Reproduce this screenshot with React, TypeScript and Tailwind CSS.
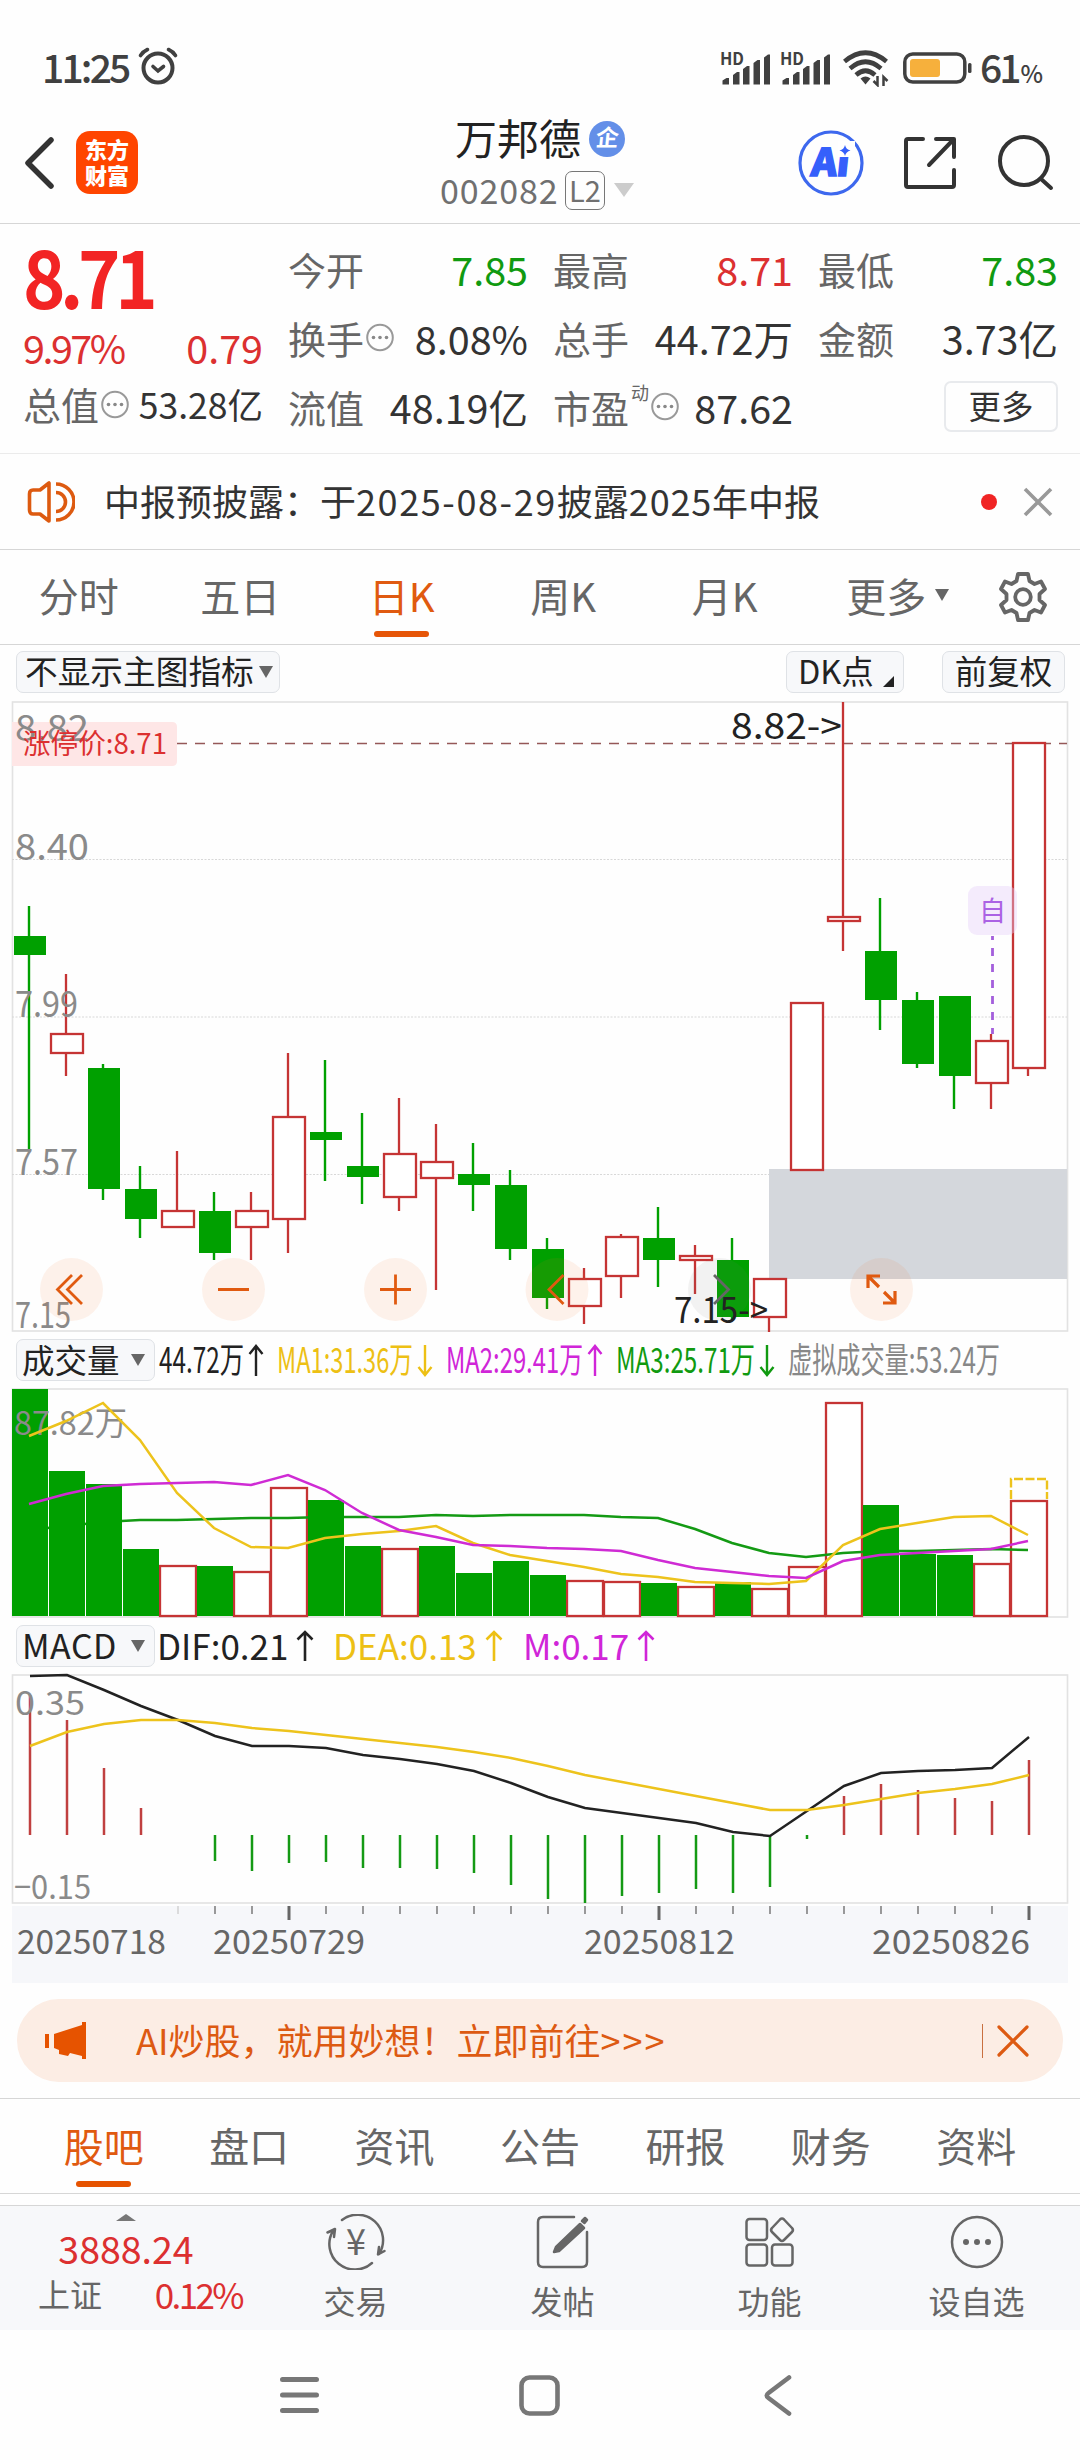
import type { ReactNode } from 'react';

type Candle = { up: boolean; high: number; top: number; bottom: number; low: number };

const RED = '#c53434';
const GREEN = '#00a000';
const FONT = '"Noto Sans CJK SC", sans-serif';

// [rise?, high, body top, body bottom, low] in chart pixels
const rawCandles: [number, number, number, number, number][] = [
  [0, 906, 936, 955, 1149],
  [1, 974, 1033, 1054, 1076],
  [0, 1064, 1068, 1189, 1200],
  [0, 1166, 1189, 1219, 1238],
  [1, 1151, 1210, 1228, 1228],
  [0, 1192, 1211, 1253, 1260],
  [1, 1192, 1210, 1228, 1260],
  [1, 1053, 1116, 1220, 1253],
  [0, 1060, 1132, 1140, 1181],
  [0, 1113, 1166, 1177, 1204],
  [1, 1098, 1153, 1198, 1211],
  [1, 1124, 1161, 1179, 1290],
  [0, 1143, 1174, 1185, 1211],
  [0, 1170, 1185, 1249, 1260],
  [0, 1238, 1249, 1298, 1309],
  [1, 1268, 1278, 1307, 1324],
  [1, 1234, 1236, 1277, 1298],
  [0, 1207, 1238, 1260, 1287],
  [1, 1245, 1255, 1261, 1294],
  [0, 1238, 1260, 1317, 1321],
  [1, 1278, 1278, 1318, 1332],
  [1, 1002, 1002, 1171, 1171],
  [1, 702, 916, 922, 951],
  [0, 898, 951, 1000, 1030],
  [0, 992, 1000, 1064, 1068],
  [0, 996, 996, 1076, 1109],
  [1, 1034, 1040, 1084, 1109],
  [1, 742, 742, 1069, 1076],
];

const candles: Candle[] = rawCandles.map(([up, high, top, bottom, low]) => ({ up: up === 1, high, top, bottom, low }));

const volumeTops = [
  1389, 1471, 1484, 1549, 1565, 1566, 1571, 1487, 1500, 1546, 1548, 1546, 1573, 1561, 1575, 1580, 1581, 1583, 1586, 1582,
  1588, 1566, 1402, 1505, 1554, 1555, 1563, 1500,
];
// days whose volume bar is hollow
const hollowVolume = [4, 6, 7, 10, 15, 16, 18, 20, 21, 22, 26, 27];
const ma1 = [
  1436, 1421, 1403, 1440, 1493, 1528, 1547, 1548, 1538, 1534, 1531, 1526, 1543, 1555, 1561, 1567, 1574, 1577, 1582, 1583,
  1584, 1581, 1545, 1529, 1523, 1517, 1516, 1535,
];
const ma2 = [
  1504, 1494, 1486, 1484, 1483, 1482, 1485, 1475, 1490, 1513, 1530, 1537, 1545, 1546, 1548, 1549, 1551, 1560, 1568, 1572,
  1576, 1578, 1561, 1555, 1553, 1551, 1549, 1541,
];
const ma3 = [
  1530, 1526, 1522, 1520, 1520, 1519, 1518, 1518, 1517, 1517, 1517, 1515, 1516, 1515, 1515, 1515, 1517, 1518, 1529, 1543,
  1553, 1557, 1553, 1551, 1551, 1550, 1549, 1550,
];
const dif = [
  1676, 1675, 1690, 1706, 1720, 1736, 1746, 1746, 1748, 1755, 1759, 1764, 1771, 1783, 1797, 1808, 1813, 1818, 1823, 1832,
  1836, 1811, 1786, 1773, 1771, 1770, 1768, 1737,
];
const dea = [
  1746, 1732, 1724, 1720, 1720, 1723, 1728, 1731, 1735, 1739, 1743, 1747, 1752, 1758, 1766, 1775, 1782, 1789, 1796, 1803,
  1810, 1810, 1805, 1799, 1793, 1789, 1784, 1775,
];
const macd = [
  1695, 1720, 1768, 1808, 1835, 1861, 1871, 1863, 1862, 1868, 1868, 1869, 1873, 1885, 1899, 1903, 1896, 1893, 1889, 1893,
  1887, 1839, 1796, 1784, 1790, 1798, 1801, 1760,
];

const cx = (i: number) => 29 + 37 * i;
const points = (values: number[], shift = 0) => values.map((y, i) => `${cx(i) + shift},${y}`).join(' ');

function Label({ x, y, w, size = 36, fill = '#8a8a8a', children }: { x: number; y: number; w: number; size?: number; fill?: string; children: ReactNode }) {
  return (
    <text x={x} y={y} fontSize={size} fill={fill} textLength={w} lengthAdjust="spacingAndGlyphs" fontFamily={FONT}>
      {children}
    </text>
  );
}

function Signal() {
  return (
    <svg width="50" height="34" viewBox="0 0 50 34" fill="#404040" className="overflow-visible">
      <text x="0" y="14" fontSize="16.500" fontWeight="700" textLength="24" lengthAdjust="spacingAndGlyphs" fontFamily={FONT}>HD</text>
      <path d="M2.500 33.500v-4l4-2.500h2.500v6.500zM13 33.500V24l4-3h2.500v12.500zM23 33.500V18l4-3h2.500v18.500zM33.500 33.500V12l4-3h2.500v24.500zM44 33.500V6.500l4-3h2v30z" />
    </svg>
  );
}

function StatusBar() {
  return (
    <div className="flex h-[110px] items-center justify-between pt-[26px] pl-[42px] pr-[43px] text-[#404040]">
      <div className="flex items-center">
        <span className="w-[96px] text-[39px] font-medium tracking-[-2.800px] -mt-1">11:25</span>
        <svg width="40" height="38" viewBox="0 0 40 38" fill="none" stroke="#404040" strokeWidth="4" strokeLinecap="round" className="-mt-1">
          <circle cx="20" cy="21" r="14.500" />
          <path d="M2.500 8.500Q5 4.500 9.500 2.500M30.500 2.500Q35 4.500 37.500 8.500" strokeWidth="3.600" />
          <path d="M15 19.500l5 4.500 5.500-4.500" strokeWidth="3.600" />
        </svg>
      </div>
      <div className="flex items-center">
        <Signal />
        <div className="w-[10px]" />
        <Signal />
        <svg width="48" height="38" viewBox="0 0 48 38" fill="none" stroke="#404040" strokeWidth="4.600" className="ml-[12px]">
          <path d="M2.500 12.500Q23.500-5 44.500 12.500" />
          <path d="M8 19.500Q23.500 6 39 19.500" />
          <path d="M14 26Q23.500 17.500 33 26" />
          <path d="M18.500 29.500Q23.500 25.500 28.500 29.500L23.500 35.500z" fill="#404040" stroke="none" />
          <path d="M35.500 27v9l-4-4M41.500 37v-9l4 4" strokeWidth="2.500" />
        </svg>
        <svg width="70" height="32" viewBox="0 0 70 32" className="ml-[13px]">
          <rect x="1.800" y="2" width="60" height="28" rx="8" fill="none" stroke="#404040" strokeWidth="3.500" />
          <rect x="7" y="7" width="30" height="18" rx="3" fill="#f6b03c" />
          <rect x="65" y="11" width="3.500" height="10" rx="1.500" fill="#404040" />
        </svg>
        <span className="ml-[7px] flex w-[57px] items-baseline -mt-1 text-[39px] font-medium tracking-[-3px]">
          61<span className="ml-[2px] text-[24px] tracking-[-1px]">%</span>
        </span>
      </div>
    </div>
  );
}

function Header() {
  return (
    <header className="flex h-[114px] items-center border-b border-[#d6d6d6] pb-[8px]">
      <div className="flex w-[398px] items-center pl-[24px]">
        <svg width="32" height="54" viewBox="0 0 32 54" fill="none" stroke="#333" strokeWidth="5.500" strokeLinecap="round" strokeLinejoin="round">
          <path d="M27 4L4 27l23 23" />
        </svg>
        <div className="ml-[20px] flex h-[63px] w-[62px] flex-col items-center justify-center gap-[2px] rounded-[14px] bg-[#ff4500] pb-[3px] text-[22px] leading-[24px] font-black text-white">
          <span>东方</span>
          <span>财富</span>
        </div>
      </div>
      <div className="flex w-[282px] flex-col items-center">
        <div className="flex h-[46px] items-center pl-[2px]">
          <span className="-mt-[3px] text-[42px] text-[#222]">万邦德</span>
          <span className="ml-[8px] flex size-[36px] items-center justify-center rounded-full bg-[#638fe8] text-[23px] font-bold text-white">
            <span className="-mt-1 -skew-x-6">企</span>
          </span>
        </div>
        <div className="-ml-[4px] mt-[9px] flex h-[39px] items-center text-[34px] text-[#707070]">
          <span className="w-[125px] tracking-[0.900px]">002082</span>
          <span className="flex h-[39px] w-[40px] items-center justify-center rounded-[7px] border border-[#777] pb-[2px] text-[29px]">L2</span>
          <svg width="20" height="14" viewBox="0 0 20 14" className="ml-[9px]"><path d="M0 0h20L10 14z" fill="#ccc" /></svg>
        </div>
      </div>
      <div className="flex flex-1 items-center pl-[118px]">
        <svg width="66" height="66" viewBox="0 0 66 66">
          <circle cx="33" cy="33" r="31" fill="none" stroke="#3d68ee" strokeWidth="3.200" />
          <g fill="#3560fb">
            <text x="13" y="46" fontSize="38" fontWeight="900" textLength="38" lengthAdjust="spacingAndGlyphs" stroke="#3560fb" strokeWidth="1.500" transform="skewX(-6) translate(4 0)" fontFamily={FONT}>Ai</text>
            <rect x="40" y="11" width="17" height="16" fill="#fff" />
            <path d="M47 15q1 4.500 5.500 5.500-4.500 1-5.500 5.500-1-4.500-5.500-5.500 4.500-1 5.500-5.500z" />
          </g>
        </svg>
        <svg width="54" height="54" viewBox="0 0 54 54" fill="none" stroke="#333" strokeWidth="4" strokeLinecap="round" strokeLinejoin="round" className="ml-[39px]">
          <path d="M20 3H5Q3 3 3 5v44q0 2 2 2h44q2 0 2-2V34M33 3h18v18M50 4L26 29" />
        </svg>
        <svg width="56" height="56" viewBox="0 0 56 56" fill="none" stroke="#333" strokeWidth="4" strokeLinecap="round" className="ml-[41px]">
          <circle cx="26" cy="26" r="24" />
          <path d="M42.500 43.500L53 53" />
        </svg>
      </div>
    </header>
  );
}

function Info() {
  return (
    <svg width="28" height="29" viewBox="0 0 28 28" className="ml-[2px]">
      <circle cx="14" cy="14" r="12.800" fill="none" stroke="#999" strokeWidth="2" />
      <g fill="#888"><circle cx="7.500" cy="14" r="1.800" /><circle cx="14" cy="14" r="1.800" /><circle cx="20.500" cy="14" r="1.800" /></g>
    </svg>
  );
}

function Stat({ label, value, color = 'text-[#333]', extra }: { label: string; value: string; color?: string; extra?: ReactNode }) {
  return (
    <div className="flex items-center justify-between whitespace-nowrap">
      <span className="flex items-center text-[38px] text-[#666]">{label}{extra}</span>
      <span className={`text-[39.500px] ${color}`}>{value}</span>
    </div>
  );
}

function Quote() {
  return (
    <section className="grid h-[230px] grid-cols-4 gap-x-[25px] border-b border-[#ebebeb] pt-[10px] pr-[22px] pb-[12px] pl-[23px]">
      <div className="flex flex-col">
        <span className="h-[85px] origin-left scale-x-90 text-[80px] leading-[80px] font-bold tracking-[-6px] text-[#f22424]">8.71</span>
        <div className="flex h-[52px] items-center justify-between pt-1 text-[39.500px] text-[#dc3030]">
          <span className="tracking-[-2.500px]">9.97%</span>
          <span>0.79</span>
        </div>
        <div className="flex h-[66px] items-center justify-between text-[38px] whitespace-nowrap text-[#666]">
          <span className="flex items-center">总值<Info /></span>
          <span className="text-[35.500px] text-[#333]">53.28亿</span>
        </div>
      </div>
      <div className="grid grid-rows-3">
        <Stat label="今开" value="7.85" color="text-[#109a10]" />
        <Stat label="换手" value="8.08%" extra={<Info />} />
        <Stat label="流值" value="48.19亿" />
      </div>
      <div className="grid grid-rows-3">
        <Stat label="最高" value="8.71" color="text-[#dc3030]" />
        <Stat label="总手" value="44.72万" />
        <Stat label="市盈" value="87.62" extra={<><span className="-mt-[30px] ml-[2px] text-[18px]">动</span><Info /></>} />
      </div>
      <div className="grid grid-rows-3">
        <Stat label="最低" value="7.83" color="text-[#109a10]" />
        <Stat label="金额" value="3.73亿" />
        <div className="flex items-center justify-end">
          <button className="flex h-[51px] w-[114px] items-center justify-center rounded-[7px] border-2 border-[#e8eaed] pb-[2px] text-[32.500px] text-[#333]">更多</button>
        </div>
      </div>
    </section>
  );
}

function Notice() {
  return (
    <section className="flex h-[96px] items-center border-b border-[#d6d6d6] pl-[27px]">
      <svg width="48" height="42" viewBox="0 0 48 42" fill="none" stroke="#dd5a10" strokeWidth="3.600">
        <path d="M22 2v38L13 33H6q-3.500 0-3.500-4V13q0-4 3.500-4h7z" strokeLinejoin="round" />
        <path d="M29 3a18 18 0 0 1 0 36M29 11.500a9.500 9.500 0 0 1 0 19" />
      </svg>
      <span className="ml-[29px] -mt-1 w-[761px] text-[36px] whitespace-nowrap text-[#333]">
        中报预披露：于<span className="tracking-[1.600px]">2025-08-29</span>披露<span className="tracking-[0.800px]">2025</span>年中报
      </span>
      <span className="ml-[116px] size-[16px] rounded-full bg-[#f02424]" />
      <svg width="30" height="30" viewBox="0 0 30 30" stroke="#999" strokeWidth="3.600" className="ml-[26px]">
        <path d="M2 2l26 26M28 2L2 28" />
      </svg>
    </section>
  );
}

function Down({ className = '' }: { className?: string }) {
  return <svg width="14" height="12" viewBox="0 0 14 12" className={className}><path d="M0 0h14L7 12z" fill="#666" /></svg>;
}

function PeriodTabs() {
  return (
    <nav className="flex h-[95px] items-stretch border-b border-[#d6d6d6] text-[40px] text-[#666]">
      {['分时', '五日', '日K', '周K', '月K', '更多'].map(tab => (
        <div key={tab} className={`relative flex w-[161.500px] items-center justify-center pr-[4px] pb-[4px] ${tab === '日K' ? 'text-[#e05a10]' : ''}`}>
          {tab}
          {tab === '日K' && <span className="absolute bottom-[7px] h-[6px] w-[55px] rounded-full bg-[#e65507]" />}
          {tab === '更多' && <Down className="absolute right-[20px]" />}
        </div>
      ))}
      <svg width="48" height="50" viewBox="0 0 48 50" fill="none" stroke="#666" strokeWidth="3.800" strokeLinejoin="round" className="mt-[22px] ml-[30px]">
        <path d="M19 2h10l1.500 7 5 3 6.500-2.500 4 7.500-5.500 5v6l5.500 5-4 7.500-6.500-2.500-5 3L29 48H19l-1.500-7-5-3L6 40.500 2 33l5.500-5v-6L2 17l4-7.500 6.500 2.500 5-3z" />
        <circle cx="24" cy="25" r="7.800" />
      </svg>
    </nav>
  );
}

function Pill({ className, children }: { className: string; children: ReactNode }) {
  return <div className={`flex h-[42px] items-center rounded-[7px] border border-[#dfe2e6] bg-[#f7f8fa] whitespace-nowrap text-[#222] ${className}`}>{children}</div>;
}

function ChartToolbar() {
  return (
    <div className="flex h-[55px] items-center pb-[2px] pl-[16px]">
      <Pill className="w-[264px] pl-[8px] text-[32.700px]"><span className="-mt-[2px]">不显示主图指标</span><Down className="ml-[5px]" /></Pill>
      <Pill className="ml-auto w-[118px] pl-[11px] text-[32.500px]">
        <span className="-mt-[2px]">DK点</span>
        <svg width="11" height="11" viewBox="0 0 11 11" className="mt-[20px] ml-[9px]"><path d="M11 0v11H0z" fill="#222" /></svg>
      </Pill>
      <Pill className="mr-[15px] ml-[38px] w-[123px] justify-center text-[32.500px]"><span className="-mt-[2px]">前复权</span></Pill>
    </div>
  );
}

function Frame({ y, height }: { y: number; height: number }) {
  return <rect x="12.500" y={y} width="1055" height={height} fill="none" stroke="#e2e2e2" strokeWidth="1.600" />;
}

function PriceChart() {
  return (
    <svg width="1080" height="634" viewBox="0 700 1080 634" className="block">
      <Frame y={702} height={629} />
      {[859.5, 1017, 1174.5].map(y => (
        <path key={y} d={`M12 ${y}H1067`} stroke="#d8d8d8" strokeWidth="1" strokeDasharray="2 1.500" />
      ))}
      <rect x="769" y="1169" width="298" height="110" fill="#d4d7dc" />
      <path d="M177 743.500H1067" stroke="#955858" strokeWidth="1.400" strokeDasharray="10 8" />
      {candles.map((c, i) => {
        const x = cx(i);
        return c.up ? (
          <g key={i} stroke={RED} strokeWidth="2.300" fill="#fff">
            <path d={`M${x} ${c.high}V${c.top}M${x} ${c.bottom}V${c.low}`} />
            <rect x={x - 15} y={c.top + 1} width="32" height={c.bottom - c.top - 2} />
          </g>
        ) : (
          <g key={i} fill={GREEN}>
            <rect x={x - 1.2} y={c.high} width="2.400" height={c.low - c.high} />
            <rect x={x - 15} y={c.top} width="32" height={c.bottom - c.top} />
          </g>
        );
      })}
      <path d="M12 722H172q5 0 5 5v34q0 5-5 5H12z" fill="#fee6e6" />
      <Label x={15} y={741} w={74}>8.82</Label>
      <Label x={15} y={860} w={74}>8.40</Label>
      <Label x={15} y={1017} w={63}>7.99</Label>
      <Label x={15} y={1175} w={63}>7.57</Label>
      <Label x={15} y={1328} w={56}>7.15</Label>
      <Label x={23} y={754} w={144} size={28} fill="#dc3030">涨停价:8.71</Label>
      <Label x={731} y={739} w={111} fill="#222">8.82-&gt;</Label>
      <path d="M992.500 936V1034" stroke="#a45fdc" strokeWidth="2.800" strokeDasharray="8 8" strokeDashoffset="4" />
      <rect x="968" y="886" width="49" height="49" rx="9" fill="#e6d0fb" opacity="0.400" />
      <text x="992.500" y="921" fontSize="27" fill="#ab62e4" textAnchor="middle" fontFamily={FONT}>自</text>
      {[71.5, 233.5, 395.5, 557, 719.5, 881.5].map(x => (
        <circle key={x} cx={x} cy="1289.500" r="31.500" fill={x === 719.5 ? '#777' : '#f26a20'} opacity="0.090" />
      ))}
      <g fill="none" stroke="#e05a10" strokeWidth="2.800">
        <path d="M72 1275l-14.500 14.500L72 1304M82 1275l-14.500 14.500L82 1304" />
        <path d="M218 1289.500H249M380 1289.500H411M395.500 1274.500V1304.500" />
        <path d="M563.500 1275L549 1289.500 563.500 1304" />
        <path d="M868 1288V1276H880M868.500 1276.500L879 1287M895 1291V1303H883M894.500 1302.500L884 1292" strokeWidth="3.200" />
      </g>
      <path d="M714 1275L728.500 1289.500 714 1304" fill="none" stroke="#666" strokeWidth="2.800" />
      <Label x={674} y={1323} w={94} fill="#222">7.15-&gt;</Label>
    </svg>
  );
}

const volumeLegend = [
  { text: '44.72万', arrow: '↑', cls: 'text-[#222]', w: 105 },
  { text: 'MA1:31.36万', arrow: '↓', cls: 'text-[#edc014]', w: 156 },
  { text: 'MA2:29.41万', arrow: '↑', cls: 'text-[#d025d8]', w: 157 },
  { text: 'MA3:25.71万', arrow: '↓', cls: 'text-[#109a10]', w: 159 },
  { text: '虚拟成交量:53.24万', arrow: '', cls: 'text-[#888]', w: 212 },
];

function VolumeLegend() {
  return (
    <div className="flex h-[52px] items-center pl-[16px]">
      <Pill className="w-[139px] justify-between pr-[9px] pl-[5px] text-[32.500px]"><span className="-mt-[2px]">成交量</span><Down /></Pill>
      <div className="ml-[4px] flex items-center gap-[13px]">
        {volumeLegend.map(item => (
          <svg key={item.text} width={item.w} height="42" viewBox={`0 0 ${item.w} 42`} className={`overflow-visible ${item.cls}`}>
            <text x="0" y="34" fontSize="35" fill="currentColor" textLength={item.arrow ? item.w - 20 : item.w} lengthAdjust="spacingAndGlyphs" fontFamily={FONT}>{item.text}</text>
            {item.arrow && (
              <path
                d={item.arrow === '↑' ? 'M8 37V7M1.500 15L8 7l6.500 8' : 'M8 6V36M1.500 28L8 36l6.500-8'}
                transform={`translate(${item.w - 16} 0)`}
                fill="none"
                stroke="currentColor"
                strokeWidth="2.400"
              />
            )}
          </svg>
        ))}
      </div>
    </div>
  );
}

function VolumeChart() {
  return (
    <svg width="1080" height="234" viewBox="0 1386 1080 234" className="block">
      <Frame y={1389} height={228} />
      {hollowVolume.map(i => (
        <rect key={i} x={cx(i) - 17} y={volumeTops[i] + 1} width="36" height={1615 - volumeTops[i]} fill="#fff" stroke={RED} strokeWidth="2.300" />
      ))}
      <polyline points={points(ma3)} fill="none" stroke="#149a14" strokeWidth="2.500" />
      {volumeTops.map((top, i) =>
        hollowVolume.includes(i) ? null : <rect key={i} x={cx(i) - 17} y={top} width="36" height={1616 - top} fill={GREEN} />,
      )}
      <path d="M1011 1499V1479H1047V1499" fill="none" stroke="#edc31c" strokeWidth="2.400" strokeDasharray="9 2.500" />
      <Label x={14} y={1435} w={113} size={33}>87.82万</Label>
      <polyline points={points(ma1)} fill="none" stroke="#edc31c" strokeWidth="2.500" />
      <polyline points={points(ma2)} fill="none" stroke="#cf2bd4" strokeWidth="2.500" />
    </svg>
  );
}

function UpArrow() {
  return (
    <svg width="18" height="32" viewBox="0 0 18 32" fill="none" stroke="currentColor" strokeWidth="2.600" className="shrink-0">
      <path d="M9 31V2M1.500 9.500L9 2l7.500 7.500" />
    </svg>
  );
}

function MacdLegend() {
  return (
    <div className="flex h-[52px] items-center pl-[16px] text-[35px] whitespace-nowrap">
      <Pill className="w-[139px] justify-between pr-[9px] pl-[5px] text-[34px]"><span className="-mt-[2px] tracking-[0.500px]">MACD</span><Down /></Pill>
      <span className="flex w-[178px] items-center gap-[8px] pl-[2px] text-[#222]"><span className="-mt-[3px]">DIF:0.21</span><UpArrow /></span>
      <span className="flex w-[190px] items-center gap-[8px] text-[#edc014]"><span className="-mt-[3px]">DEA:0.13</span><UpArrow /></span>
      <span className="flex items-center gap-[8px] text-[#d025d8]"><span className="-mt-[3px]">M:0.17</span><UpArrow /></span>
    </div>
  );
}

function MacdChart() {
  return (
    <svg width="1080" height="312" viewBox="0 1672 1080 312" className="block">
      <rect x="12" y="1906" width="1056" height="77" fill="#f6f7fa" />
      <Frame y={1675} height={228} />
      {macd.map((y, i) => (
        <path key={i} d={`M${cx(i) + 1} 1835V${y}`} stroke={y < 1835 ? '#c04040' : '#149a14'} strokeWidth="2.500" />
      ))}
      <polyline points={points(dif, 1)} fill="none" stroke="#222" strokeWidth="2.500" />
      <polyline points={points(dea, 1)} fill="none" stroke="#edc31c" strokeWidth="2.500" />
      <Label x={15} y={1715} w={70} size={33}>0.35</Label>
      <Label x={14} y={1899} w={77} size={33}>−0.15</Label>
      {macd.map((_, i) => {
        if (i < 4) return null;
        const major = i % 10 === 7;
        return <path key={i} d={`M${cx(i) + 1} 1906V${major ? 1920 : 1914}`} stroke={i === 4 ? '#ccc' : '#666'} strokeWidth={major ? 3 : 1.3} />;
      })}
      <Label x={17} y={1954} w={149} size={33} fill="#666">20250718</Label>
      <Label x={213} y={1954} w={152} size={33} fill="#666">20250729</Label>
      <Label x={584} y={1954} w={151} size={33} fill="#666">20250812</Label>
      <Label x={872} y={1954} w={158} size={33} fill="#666">20250826</Label>
    </svg>
  );
}

function Banner() {
  return (
    <div className="mx-[17px] mt-[15px] mb-[16px] flex h-[83px] items-center rounded-full bg-[#fcede4] pl-[28px]">
      <svg width="42" height="38" viewBox="0 0 42 38" fill="#e65300">
        <path d="M0 12h4v14H0zM9 12L37 3V0h4v37h-4v-3l-12-3-2 3-9-2v-4l-5-2z" />
      </svg>
      <span className="ml-[49px] -mt-[3px] text-[36px] whitespace-nowrap text-[#dd5a12]">
        AI炒股，就用妙想！立即前往<span className="tracking-[2px]">&gt;&gt;&gt;</span>
      </span>
      <span className="mr-[14px] ml-auto h-[34px] w-[1.500px] bg-[#c97040]" />
      <svg width="32" height="32" viewBox="0 0 32 32" stroke="#dd5a12" strokeWidth="3.200" strokeLinecap="round" className="mr-[34px]">
        <path d="M2 2l28 28M30 2L2 30" />
      </svg>
    </div>
  );
}

function SectionTabs() {
  return (
    <nav className="flex h-[96px] border-y border-[#d6d6d6] px-[31px] text-[40px] text-[#666]">
      {['股吧', '盘口', '资讯', '公告', '研报', '财务', '资料'].map((tab, i) => (
        <div key={tab} className={`relative flex flex-1 items-center justify-center pb-[3px] ${i === 0 ? 'text-[#e05a10]' : ''}`}>
          {tab}
          {i === 0 && <span className="absolute bottom-[6px] h-[6px] w-[55px] rounded-full bg-[#e65300]" />}
        </div>
      ))}
    </nav>
  );
}

function Action({ label, children }: { label: string; children: ReactNode }) {
  return (
    <div className="flex w-[207px] flex-col items-center pt-[8px]">
      <svg width="60" height="56" viewBox="0 0 60 56" fill="none" stroke="#666" strokeWidth="2.500" strokeLinecap="round" strokeLinejoin="round">{children}</svg>
      <span className="mt-[14px] text-[32px] text-[#666]">{label}</span>
    </div>
  );
}

function BottomBar() {
  return (
    <footer className="mt-[11px] flex h-[125px] border-t border-[#d6d6d6] bg-[#f7f8fa]">
      <div className="flex w-[252px] flex-col items-center">
        <svg width="20" height="7" viewBox="0 0 20 7" className="mt-[8px]"><path d="M0 7h20L10 0z" fill="#777" /></svg>
        <span className="mt-[8px] h-[38px] text-[37.500px] text-[#dc3030]">3888.24</span>
        <div className="mt-[9px] flex h-[34px] w-full items-center justify-between pr-[12px] pl-[38px] text-[32px] text-[#666]">
          <span>上证</span>
          <span className="-mr-[2px] text-[35px] tracking-[-2.600px] text-[#dc3030]">0.12%</span>
        </div>
      </div>
      <Action label="交易">
        <path d="M16 6A25.500 25.500 0 0 1 53 40M46 49A25.500 25.500 0 0 1 7 17M1.500 18.500L9 15l-1 8M58.500 37L52 40.500 53 33" />
        <text x="30" y="41" fontSize="36" textAnchor="middle" fill="#666" stroke="none" fontFamily={FONT}>¥</text>
      </Action>
      <Action label="发帖">
        <path d="M41 3H10Q5 3 5 8v40q0 5 5 5h39q5 0 5-5V18" />
        <path d="M47 10l4 4-25 23-5 1 2-5zM49 7l3-3 2 2-2.500 3z" fill="#666" />
      </Action>
      <Action label="功能">
        <rect x="6.500" y="5" width="20.500" height="21" rx="3" />
        <rect x="6.500" y="30.500" width="20.500" height="21" rx="3" />
        <rect x="32" y="30.500" width="20.500" height="21" rx="3" />
        <path d="M40 5.500q2-2 4 0l8 8.500q2 2 0 4l-8 8q-2 2-4 0l-8-8q-2-2 0-4z" />
      </Action>
      <Action label="设自选">
        <circle cx="30" cy="28" r="25" />
        <g fill="#666" stroke="none"><circle cx="19" cy="28" r="3" /><circle cx="30" cy="28" r="3" /><circle cx="41" cy="28" r="3" /></g>
      </Action>
    </footer>
  );
}

function SystemNav() {
  return (
    <div className="flex h-[130px] items-center justify-center gap-[200px] pr-[1px]">
      <svg width="39" height="38" viewBox="0 0 39 38" stroke="#777" strokeWidth="5" strokeLinecap="round"><path d="M2.500 3.500h34M2.500 19h34M2.500 34.500h34" /></svg>
      <svg width="41" height="41" viewBox="0 0 41 41" fill="none" stroke="#777" strokeWidth="4.600"><rect x="2.500" y="2.500" width="36" height="36" rx="8" /></svg>
      <svg width="39" height="41" viewBox="0 0 39 41" fill="none" stroke="#777" strokeWidth="4.600" strokeLinecap="round"><path d="M29 2.500L8.500 18q-3.500 2.500 0 5L29 38.500" /></svg>
    </div>
  );
}

export default function App() {
  return (
    <div className="h-[2460px] w-[1080px] overflow-hidden bg-[#fefefe] font-['Noto_Sans_CJK_SC',sans-serif] leading-none">
      <StatusBar />
      <Header />
      <Quote />
      <Notice />
      <PeriodTabs />
      <ChartToolbar />
      <PriceChart />
      <VolumeLegend />
      <VolumeChart />
      <MacdLegend />
      <MacdChart />
      <Banner />
      <SectionTabs />
      <BottomBar />
      <SystemNav />
    </div>
  );
}
